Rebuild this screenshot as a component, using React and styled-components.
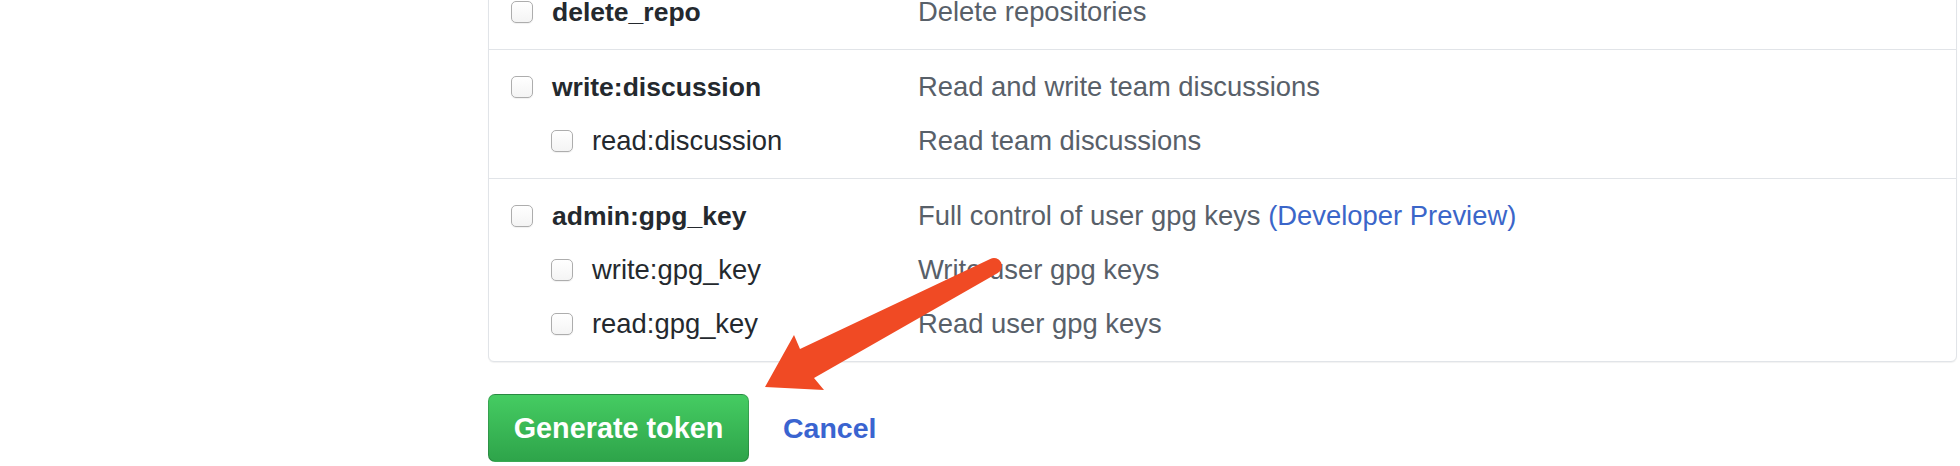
import React from 'react'
import styled, { createGlobalStyle } from 'styled-components'

const GlobalStyle = createGlobalStyle`
  html, body {
    margin: 0;
    padding: 0;
    background: #fff;
  }
  body {
    font-family: 'Liberation Sans', Arial, sans-serif;
  }
`;

const Page = styled.div`
  position: relative;
  width: 1960px;
  height: 466px;
  overflow: hidden;
  padding-left: 488px;
  box-sizing: border-box;
`;

const Box = styled.div`
  width: 1469px;
  box-sizing: border-box;
  margin-top: -26px;
  border: 1px solid #e1e4e8;
  border-radius: 6px;
  background: #fff;
  box-shadow: 0 1px 1px rgba(27, 31, 35, 0.06);
`;

const Group = styled.div`
  padding: 10px 0;
  border-top: ${props => (props.first ? 'none' : '1px solid #e1e4e8')};
`;

const Row = styled.div`
  display: flex;
  align-items: center;
  height: 54px;
`;

const Cell = styled.label`
  display: flex;
  align-items: center;
  gap: 19px;
  width: 429px;
  box-sizing: border-box;
  padding-left: ${props => (props.sub ? '62px' : '22px')};
  font-size: ${props => (props.sub ? '27.4px' : '26.5px')};
  font-weight: ${props => (props.sub ? 400 : 700)};
  color: #24292e;
`;

const Check = styled.input.attrs({ type: 'checkbox' })`
  appearance: none;
  -webkit-appearance: none;
  margin: 0;
  width: 22px;
  height: 22px;
  flex: none;
  border: 1.5px solid #adadad;
  border-radius: 5px;
  background: linear-gradient(#ffffff, #f4f4f4);
  box-shadow: 0 1px 1px rgba(0, 0, 0, 0.06);
  box-sizing: border-box;
`;

const Desc = styled.span`
  font-size: 27.4px;
  color: #586069;
`;

const Preview = styled.a`
  color: #3b66c9;
  text-decoration: none;
`;

const Actions = styled.div`
  display: flex;
  align-items: center;
  gap: 34px;
  margin-top: 32px;
`;

const Button = styled.button`
  width: 261px;
  height: 68px;
  box-sizing: border-box;
  border: 1px solid rgba(27, 31, 35, 0.2);
  border-radius: 7px;
  background: linear-gradient(180deg, #45cc62 0%, #2ea44a 100%);
  color: #fff;
  font-family: inherit;
  font-size: 28.8px;
  font-weight: 700;
  cursor: pointer;
`;

const Cancel = styled.a`
  color: #3a64d0;
  font-size: 28.5px;
  font-weight: 700;
  text-decoration: none;
`;

const Overlay = styled.svg`
  position: absolute;
  left: 0;
  top: 0;
  pointer-events: none;
`;

const groups = [
  [{ name: 'delete_repo', desc: 'Delete repositories' }],
  [
    { name: 'write:discussion', desc: 'Read and write team discussions' },
    { name: 'read:discussion', desc: 'Read team discussions', sub: true },
  ],
  [
    { name: 'admin:gpg_key', desc: 'Full control of user gpg keys', preview: true },
    { name: 'write:gpg_key', desc: 'Write user gpg keys', sub: true },
    { name: 'read:gpg_key', desc: 'Read user gpg keys', sub: true },
  ],
];

const App = () => {
  return (
    <Page>
      <GlobalStyle />
      <Box>
        {groups.map((rows, i) => (
          <Group key={i} first={i === 0}>
            {rows.map(row => (
              <Row key={row.name}>
                <Cell sub={row.sub}>
                  <Check />
                  {row.name}
                </Cell>
                <Desc>
                  {row.desc}
                  {row.preview && <> <Preview href="#">(Developer Preview)</Preview></>}
                </Desc>
              </Row>
            ))}
          </Group>
        ))}
      </Box>
      <Actions>
        <Button>Generate token</Button>
        <Cancel href="#">Cancel</Cancel>
      </Actions>
      {/* annotation arrow */}
      <Overlay width="1960" height="466" viewBox="0 0 1960 466">
        <path
          d="M 990.2 259 A 7.5 7.5 0 0 1 997.8 273 L 814 378 L 824 390 L 765 387 L 794 335 L 800 349 Z"
          fill="#f04a24"
        />
      </Overlay>
    </Page>
  )
}

export default App
